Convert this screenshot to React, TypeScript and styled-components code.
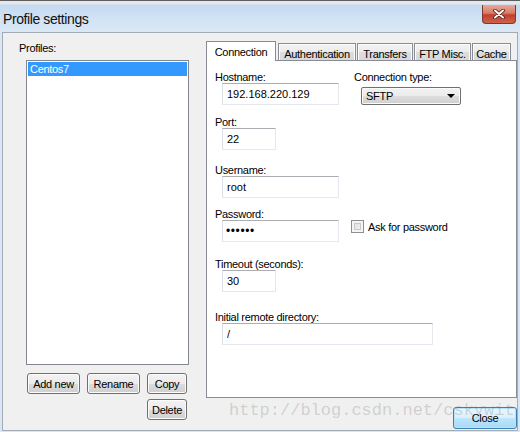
import React from "react";
import styled, { createGlobalStyle } from "styled-components";

const GlobalStyle = createGlobalStyle`
  html, body { margin: 0; padding: 0; }
  body { background: #d6e5f5; font-family: "Liberation Sans", Arial, sans-serif; }
  * { box-sizing: border-box; }
`;

const Window = styled.div`
  position: relative;
  width: 520px;
  height: 432px;
  overflow: hidden;
  display: flex;
  flex-direction: column;
  background: #d8e6f5;
  font-family: "Liberation Sans", Arial, sans-serif;
  font-size: 11px;
  letter-spacing: -0.3px;
  color: #000;
`;

const TitleBar = styled.div`
  flex: none;
  height: 32px;
  display: flex;
  justify-content: space-between;
  align-items: flex-start;
  border-top: 1px solid #5e5e5e;
  background: linear-gradient(
    to bottom,
    #e4e7eb 0px,
    #e4e7eb 3px,
    #c4d9f0 4px,
    #d2e3f4 60%,
    #dae8f6 100%
  );
`;

const Title = styled.div`
  padding: 10px 0 0 3px;
  font-size: 14px;
  line-height: 16px;
  letter-spacing: -0.4px;
  color: #111;
`;

const CloseX = styled.div`
  margin: 4px 4px 0 0;
  width: 34px;
  height: 19px;
  border: 1px solid #7a3a30;
  border-top: none;
  border-radius: 0 0 4px 4px;
  background: linear-gradient(
    to bottom,
    #e9a99a 0%,
    #d67b68 45%,
    #c2402c 55%,
    #d0624b 100%
  );
  display: flex;
  align-items: center;
  justify-content: center;
`;

const Body = styled.div`
  flex: 1;
  margin: 0 2px 1px 2px;
  background: #f0f0f0;
  border: 1px solid #a3abb5;
  display: flex;
  gap: 17px;
  padding: 8px 0 0 16px;
`;

const LeftCol = styled.div`
  width: 170px;
  flex: none;
  display: flex;
  flex-direction: column;
`;

const GroupLabel = styled.div`
  margin-top: 1px;
  line-height: 13px;
  height: 13px;
`;

const ListBox = styled.div`
  margin: 5px 0 0 7px;
  width: 163px;
  height: 305px;
  background: #fff;
  border: 1px solid #828790;
  padding: 1px;
`;

const ListItem = styled.div<{ $selected?: boolean }>`
  height: 14px;
  line-height: 14px;
  padding-left: 2px;
  background: ${(p) => (p.$selected ? "#3399ff" : "transparent")};
  color: ${(p) => (p.$selected ? "#fff" : "#000")};
`;

const ButtonGrid = styled.div`
  margin: 8px 0 0 8px;
  display: grid;
  grid-template-columns: 53px 53px 40px;
  grid-auto-rows: 21px;
  column-gap: 7px;
  row-gap: 5px;
`;

const Button = styled.button<{ $col?: number; $default?: boolean }>`
  grid-column: ${(p) => p.$col ?? "auto"};
  margin: 0;
  padding: 0;
  height: 21px;
  font-family: inherit;
  font-size: 11px;
  letter-spacing: -0.3px;
  color: #000;
  border: 1px solid ${(p) => (p.$default ? "#3c7fb1" : "#707070")};
  border-radius: 3px;
  box-shadow: inset 0 0 0 1px ${(p) => (p.$default ? "#b9e3f9" : "#fcfcfc")};
  background: ${(p) =>
    p.$default
      ? "linear-gradient(to bottom, #eaf6fd 0%, #d9f0fc 50%, #bee6fd 51%, #a7d9f5 100%)"
      : "linear-gradient(to bottom, #f2f2f2 0%, #ebebeb 50%, #dddddd 51%, #cfcfcf 100%)"};
`;

const RightCol = styled.div`
  width: 311px;
  flex: none;
  display: flex;
  flex-direction: column;
`;

const TabBar = styled.div`
  height: 19px;
  display: flex;
  align-items: flex-end;
  position: relative;
  z-index: 1;
`;

const Tab = styled.div<{ $active?: boolean; $w: number; $ml?: number }>`
  width: ${(p) => p.$w}px;
  margin-left: ${(p) => p.$ml ?? 0}px;
  height: ${(p) => (p.$active ? 20 : 17)}px;
  margin-bottom: ${(p) => (p.$active ? -1 : 0)}px;
  border: 1px solid #898c95;
  border-bottom: ${(p) => (p.$active ? "none" : "0")};
  background: ${(p) =>
    p.$active ? "#ffffff" : "linear-gradient(to bottom, #f3f3f3 0%, #ebebeb 50%, #dddddd 51%, #d9d9d9 100%)"};
  box-shadow: ${(p) => (p.$active ? "none" : "inset 1px 1px 0 #fcfcfc, inset -1px 0 0 #fcfcfc")};
  text-align: center;
  line-height: 13px;
  padding-top: 4px;
  white-space: nowrap;
`;

const Panel = styled.div`
  height: 338px;
  background: #fff;
  border: 1px solid #898c95;
  padding: 10px 0 0 8px;
  display: flex;
  flex-direction: column;
`;

const Row = styled.div<{ $mt?: number }>`
  display: flex;
  margin-top: ${(p) => p.$mt ?? 0}px;
`;

const Field = styled.div<{ $w?: number }>`
  display: flex;
  flex-direction: column;
  width: ${(p) => (p.$w ? `${p.$w}px` : "auto")};
  flex: none;
`;

const Label = styled.div`
  height: 12px;
  line-height: 12px;
  white-space: nowrap;
`;

const TextInput = styled.input<{ $w: number }>`
  margin: 0 0 0 7px;
  width: ${(p) => p.$w}px;
  height: 22px;
  padding: 0 0 0 4px;
  border: 1px solid #e3e9ef;
  border-top-color: #abadb3;
  border-left-color: #dbdfe6;
  background: #fff;
  font-family: "Liberation Sans", Arial, sans-serif;
  font-size: 11px;
  letter-spacing: 0;
  color: #000;
  outline: none;
`;

const PasswordInput = styled(TextInput)`
  font-size: 12px;
  letter-spacing: 0.6px;
  padding-left: 3px;
`;

const Select = styled.div`
  margin: 4px 0 0 7px;
  width: 100px;
  height: 18px;
  border: 1px solid #707070;
  border-radius: 2px;
  box-shadow: inset 0 0 0 1px #fbfbfb;
  background: linear-gradient(to bottom, #f2f2f2 0%, #ebebeb 50%, #dddddd 51%, #cfcfcf 100%);
  display: flex;
  align-items: center;
  justify-content: space-between;
  padding: 0 5px 0 4px;
  line-height: 16px;
`;

const Arrow = styled.span`
  width: 0;
  height: 0;
  border-left: 4px solid transparent;
  border-right: 4px solid transparent;
  border-top: 4px solid #000;
`;

const CheckRow = styled.div`
  margin-top: 12px;
  display: flex;
  align-items: center;
  gap: 4px;
  height: 13px;
`;

const CheckBox = styled.span`
  width: 13px;
  height: 13px;
  border: 1px solid #8e8f8f;
  background: linear-gradient(135deg, #dcdcdc 0%, #f4f4f4 100%);
  box-shadow: inset 0 0 0 2px #f4f4f4, inset 0 0 0 3px #c8c8c8;
`;

const Footer = styled.div`
  margin-top: 9px;
  display: flex;
  justify-content: flex-end;
`;

const CloseButton = styled(Button)`
  width: 64px;
  height: 22px;
`;

const Watermark = styled.div`
  position: absolute;
  left: 229px;
  top: 402px;
  font-family: "Liberation Mono", "DejaVu Sans Mono", monospace;
  font-size: 17px;
  line-height: 17px;
  letter-spacing: 0;
  color: rgba(110, 110, 110, 0.26);
  pointer-events: none;
  white-space: nowrap;
`;

export default function App() {
  return (
    <>
      <GlobalStyle />
      <Window>
        <TitleBar>
          <Title>Profile settings</Title>
          <CloseX>
            <svg width="12" height="10" viewBox="0 0 12 10">
              <path d="M2 1.5 L10 8.5 M10 1.5 L2 8.5" stroke="#4a1a14" strokeWidth="3.6" strokeLinecap="round" />
              <path d="M2 1.5 L10 8.5 M10 1.5 L2 8.5" stroke="#ffffff" strokeWidth="2" strokeLinecap="round" />
            </svg>
          </CloseX>
        </TitleBar>
        <Body>
          <LeftCol>
            <GroupLabel>Profiles:</GroupLabel>
            <ListBox>
              <ListItem $selected>Centos7</ListItem>
            </ListBox>
            <ButtonGrid>
              <Button>Add new</Button>
              <Button>Rename</Button>
              <Button>Copy</Button>
              <Button $col={3}>Delete</Button>
            </ButtonGrid>
          </LeftCol>
          <RightCol>
            <TabBar>
              <Tab $active $w={70}>Connection</Tab>
              <Tab $w={78} $ml={2}>Authentication</Tab>
              <Tab $w={56} $ml={1}>Transfers</Tab>
              <Tab $w={57} $ml={1}>FTP Misc.</Tab>
              <Tab $w={39} $ml={1}>Cache</Tab>
            </TabBar>
            <Panel>
              <Row>
                <Field $w={139}>
                  <Label>Hostname:</Label>
                  <TextInput $w={117} readOnly value="192.168.220.129" />
                </Field>
                <Field>
                  <Label>Connection type:</Label>
                  <Select>
                    <span>SFTP</span>
                    <Arrow />
                  </Select>
                </Field>
              </Row>
              <Row $mt={11}>
                <Field>
                  <Label>Port:</Label>
                  <TextInput $w={54} readOnly value="22" />
                </Field>
              </Row>
              <Row $mt={14}>
                <Field>
                  <Label>Username:</Label>
                  <TextInput $w={117} readOnly value="root" />
                </Field>
              </Row>
              <Row $mt={10}>
                <Field $w={136}>
                  <Label>Password:</Label>
                  <PasswordInput $w={117} type="password" readOnly value="123456" />
                </Field>
                <CheckRow>
                  <CheckBox />
                  <span>Ask for password</span>
                </CheckRow>
              </Row>
              <Row $mt={16}>
                <Field>
                  <Label>Timeout (seconds):</Label>
                  <TextInput $w={54} readOnly value="30" />
                </Field>
              </Row>
              <Row $mt={19}>
                <Field>
                  <Label>Initial remote directory:</Label>
                  <TextInput $w={211} readOnly value="/" />
                </Field>
              </Row>
            </Panel>
            <Footer>
              <CloseButton $default>Close</CloseButton>
            </Footer>
          </RightCol>
        </Body>
        <Watermark>http://blog.csdn.net/cskywit</Watermark>
      </Window>
    </>
  );
}
